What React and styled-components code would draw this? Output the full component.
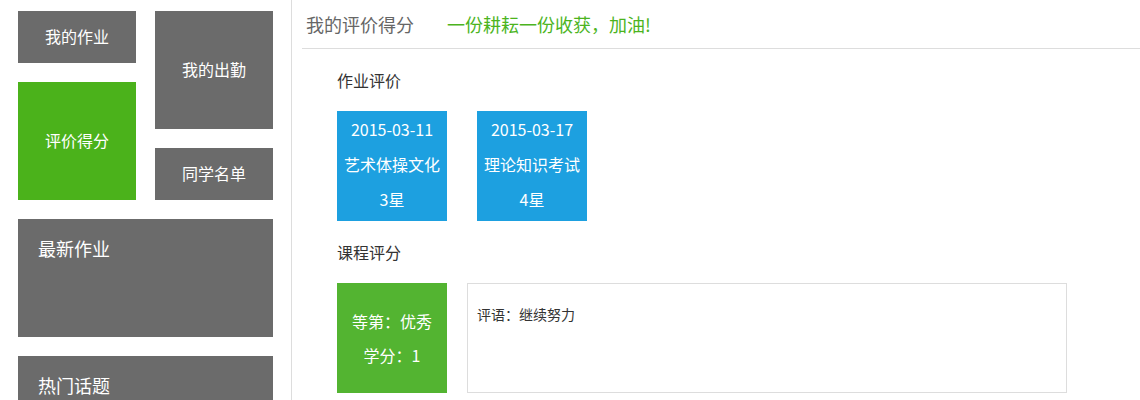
import React from 'react';
import styled, { createGlobalStyle } from 'styled-components';

const GlobalStyle = createGlobalStyle`
    body {
        margin: 0;
        background: #fff;
        font-family: "Noto Sans CJK SC", "Noto Sans", sans-serif;
    }
`;

const homeworks = [
    { date: '2015-03-11', name: '艺术体操文化', star: '3星' },
    { date: '2015-03-17', name: '理论知识考试', star: '4星' },
];

const App = () => {
    return (
        <>
        <GlobalStyle />
        <Page>
            <Sidebar>
                <TileGrid>
                    <Tile $col={1} $row="1 / 2">我的作业</Tile>
                    <Tile $col={2} $row="1 / 3">我的出勤</Tile>
                    <Tile $col={1} $row="2 / 4" $active>评价得分</Tile>
                    <Tile $col={2} $row="3 / 4">同学名单</Tile>
                </TileGrid>
                <WideTile>最新作业</WideTile>
                <WideTile>热门话题</WideTile>
            </Sidebar>
            <Main>
                <Header>
                    <HeaderTitle>我的评价得分</HeaderTitle>
                    <Slogan>一份耕耘一份收获，加油!</Slogan>
                </Header>
                <Content>
                    <SectionTitle>作业评价</SectionTitle>
                    <CardRow>
                        {homeworks.map((data) => (
                            <HomeworkCard key={data.date}>
                                <div>{data.date}</div>
                                <div>{data.name}</div>
                                <div>{data.star}</div>
                            </HomeworkCard>
                        ))}
                    </CardRow>
                    <SectionTitle>课程评分</SectionTitle>
                    <CardRow $gap={20}>
                        <ScoreCard>
                            <div>等第：优秀</div>
                            <div>学分：1</div>
                        </ScoreCard>
                        <CommentBox>评语：继续努力</CommentBox>
                    </CardRow>
                </Content>
            </Main>
        </Page>
        </>
    );
};

export default App;

const Page = styled.div`
    display: flex;
    height: 400px;
    overflow: hidden;
`;

const Sidebar = styled.div`
    width: 255px;
    flex-shrink: 0;
    padding: 11px 18px 0 18px;
    border-right: 1px solid #dddddd;
    display: flex;
    flex-direction: column;
    gap: 19px;
`;

const TileGrid = styled.div`
    display: grid;
    grid-template-columns: 118px 118px;
    grid-template-rows: 52px 47px 52px;
    gap: 19px;
`;

const Tile = styled.div`
    grid-column: ${(p) => p.$col};
    grid-row: ${(p) => p.$row};
    background: ${(p) => (p.$active ? '#4bb21b' : '#6b6b6b')};
    color: #fff;
    font-size: 16px;
    padding-bottom: 3px;
    display: flex;
    align-items: center;
    justify-content: center;
`;

const WideTile = styled.div`
    height: 118px;
    flex-shrink: 0;
    box-sizing: border-box;
    padding: 17px 20px;
    background: #6b6b6b;
    color: #fff;
    font-size: 18px;
    line-height: 24px;
`;

const Main = styled.div`
    flex: 1;
    margin-left: 10px;
`;

const Header = styled.div`
    height: 48px;
    padding-left: 4px;
    border-bottom: 1px solid #dddddd;
    display: flex;
    align-items: center;
    gap: 33px;
    font-size: 18px;
`;

const HeaderTitle = styled.span`
    color: #666666;
`;

const Slogan = styled.span`
    color: #4cb41e;
`;

const Content = styled.div`
    padding: 19px 0 0 35px;
    display: flex;
    flex-direction: column;
    gap: 19px;
`;

const SectionTitle = styled.div`
    font-size: 16px;
    line-height: 24px;
    color: #333333;
`;

const CardRow = styled.div`
    display: flex;
    gap: ${(p) => p.$gap || 30}px;
`;

const HomeworkCard = styled.div`
    width: 110px;
    height: 110px;
    box-sizing: border-box;
    padding-top: 1px;
    background: #1da0e0;
    color: #fff;
    font-size: 16px;
    line-height: 35px;
    text-align: center;
`;

const ScoreCard = styled.div`
    width: 110px;
    height: 110px;
    background: #53b431;
    color: #fff;
    font-size: 16px;
    line-height: 34px;
    display: flex;
    flex-direction: column;
    align-items: center;
    justify-content: center;
`;

const CommentBox = styled.div`
    width: 600px;
    height: 110px;
    box-sizing: border-box;
    padding: 20px 9px;
    border: 1px solid #dddddd;
    font-size: 14px;
    line-height: 20px;
    color: #333333;
`;
